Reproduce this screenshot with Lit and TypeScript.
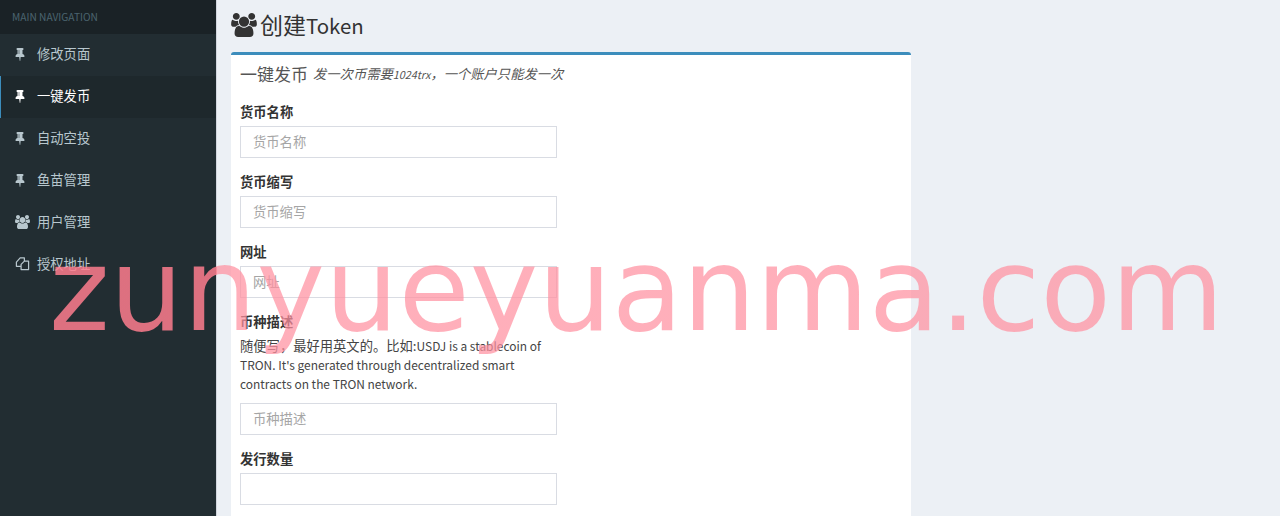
import { LitElement, html, css, svg } from "lit";
import { customElement } from "lit/decorators.js";

const pin = svg`<path d="M800 864v-448q0-14-9-23t-23-9-23 9-9 23v448q0 14 9 23t23 9 23-9 9-23zm672 352q0 26-19 45t-45 19h-429l-51 483q-2 12-10.5 20.5t-20.5 8.5h-1q-27 0-32-27l-76-485h-404q-26 0-45-19t-19-45q0-123 78.5-221.5t177.5-98.5v-512q-52 0-90-38t-38-90 38-90 90-38h640q52 0 90 38t38 90-38 90-90 38v512q99 0 177.5 98.5t78.5 221.5z"/>`;
const usersPath = svg`<path d="M593 896q-162 5-265 128h-134q-82 0-138-40.500t-56-118.500q0-353 124-353 6 0 43.500 21t97.500 42.500 119 21.500q67 0 133-23-5 37-5 66 0 139 81 256zm1071 637q0 120-73 189.500t-194 69.500h-874q-121 0-194-69.500t-73-189.500q0-53 3.500-103.500t14-109 26.500-108.500 43-97.500 62-81 85.500-53.500 111.500-20q10 0 43 21.500t73 48 107 48 135 21.500 135-21.500 107-48 73-48 43-21.500q61 0 111.500 20t85.500 53.500 62 81 43 97.500 26.500 108.500 14 109 3.500 103.500zm-1024-1277q0 106-75 181t-181 75-181-75-75-181 75-181 181-75 181 75 75 181zm704 384q0 159-112.500 271.500t-271.500 112.500-271.500-112.500-112.500-271.500 112.500-271.500 271.500-112.500 271.500 112.500 112.500 271.500zm576 225q0 78-56 118.500t-138 40.500h-134q-103-123-265-128 81-117 81-256 0-29-5-66 66 23 133 23 59 0 119-21.500t97.500-42.500 43.500-21q124 0 124 353zm-128-609q0 106-75 181t-181 75-181-75-75-181 75-181 181-75 181 75 75 181z"/>`;
const objIcon = svg`<path fill="none" stroke="currentColor" stroke-width="1.300" stroke-linejoin="round" d="M6.500 11H1.500V6.500L5.500 2H10V5.500M6.500 9L10 5.500H14.500V14.500H6.500z"/>`;

const icon = (k: string) => {
  if (k === "pin") return html`<svg class="ic pin" viewBox="0 0 1792 1792" fill="currentColor" width="14" height="14">${pin}</svg>`;
  if (k === "users") return html`<svg class="ic" viewBox="0 0 1920 1792" fill="currentColor" width="15" height="14">${usersPath}</svg>`;
  return html`<svg class="ic" viewBox="0 0 16 16" width="15" height="15">${objIcon}</svg>`;
};

const NAV = [
  ["pin", "修改页面"],
  ["pin", "一键发币", true],
  ["pin", "自动空投"],
  ["pin", "鱼苗管理"],
  ["users", "用户管理"],
  ["obj", "授权地址"],
] as const;

@customElement("app-root")
export class AppRoot extends LitElement {
  static styles = css`
    :host {
      display: block;
      width: 1280px;
      height: 516px;
      overflow: hidden;
      position: relative;
      font-family: "Noto Sans CJK SC", sans-serif;
      font-size: 13.3px;
      color: #333;
      background: #ecf0f5;
    }
    .layout { display: flex; height: 516px; }
    .side { width: 216px; flex: none; background: #222d32; border-right: 1px solid #d2d6de; box-sizing: content-box; }
    .nav-h { height: 34px; background: #1a2226; color: #4b646f; font-size: 10.2px; line-height: 33px; padding-left: 12px; }
    .nav-i { height: 42px; display: flex; align-items: center; color: #b8c7ce; border-left: 1px solid transparent; box-sizing: border-box; padding: 0 0 3px 14px; }
    .nav-i.active { background: #1e282c; color: #fff; border-left-color: #3c8dbc; }
    .ic-wrap { width: 22px; display: flex; flex: none; }
    .pin { margin-left: -2px; }
    .main { flex: 1; padding: 0 14px; min-width: 0; }
    h1 { margin: 0; height: 52px; padding-bottom: 3px; box-sizing: border-box; display: flex; align-items: center; gap: 3px; font-size: 23px; font-weight: 400; line-height: 1; }
    h1 svg { display: block; }
    h1 .lat { font-size: 20.4px; }
    .box { width: 680px; background: #fff; border-top: 3px solid #3c8dbc; border-radius: 3px 3px 0 0; box-sizing: border-box; height: 470px; padding: 0 9px; }
    .box-h { height: 36px; display: flex; align-items: center; gap: 5px; }
    .box-h span.t { font-size: 17px; color: #555; }
    .box-h em { font-size: 13.3px; color: #555; }
    .box-h em .lat { font-size: 10.8px; }
    .field { width: 317px; margin-bottom: 14px; }
    label { display: block; font-weight: 700; line-height: 20px; margin-bottom: 4px; }
    .help { line-height: 19px; margin: 0 0 10px; color: #444; }
    .help .lat { font-size: 11.95px; line-height: 1; }
    input { display: block; width: 100%; height: 32px; box-sizing: border-box; border: 1px solid #d9dce3; padding: 0 12px 2px; font: inherit; background: #fff; }
    input::placeholder { color: #a5a5a5; opacity: 1; }
    .first { padding-top: 11px; }
    .wm {
      position: absolute;
      left: 49px;
      top: 215px;
      font-family: "DejaVu Sans", sans-serif;
      font-size: 115.8px;
      line-height: 150px;
      color: transparent;
      background: linear-gradient(to right, rgba(254, 125, 142, 0.85) 168px, rgba(255, 144, 160, 0.72) 168px);
      -webkit-background-clip: text;
      background-clip: text;
      white-space: nowrap;
      pointer-events: none;
    }
  `;

  render() {
    return html`
      <div class="layout">
        <aside class="side">
          <div class="nav-h">MAIN NAVIGATION</div>
          ${NAV.map(
            (n) => html`<div class="nav-i ${n[2] ? "active" : ""}">
              <span class="ic-wrap">${icon(n[0])}</span><span>${n[1]}</span>
            </div>`
          )}
        </aside>
        <main class="main">
          <h1>
            <svg viewBox="0 0 1920 1792" fill="currentColor" width="26" height="24">${usersPath}</svg>
            <span>创建<span class="lat">Token</span></span>
          </h1>
          <section class="box">
            <div class="box-h"><span class="t">一键发币</span><em>发一次币需要<span class="lat">1024trx</span>，一个账户只能发一次</em></div>
            <div class="first"></div>
            <div class="field"><label>货币名称</label><input placeholder="货币名称" /></div>
            <div class="field"><label>货币缩写</label><input placeholder="货币缩写" /></div>
            <div class="field"><label>网址</label><input placeholder="网址" /></div>
            <div class="field">
              <label>币种描述</label>
              <div class="help">随便写，最好用英文的。比如:<span class="lat">USDJ is a stablecoin of TRON. It's generated through decentralized smart contracts on the TRON network.</span></div>
              <input placeholder="币种描述" />
            </div>
            <div class="field"><label>发行数量</label><input /></div>
          </section>
        </main>
      </div>
      <div class="wm">zunyueyuanma.com</div>
    `;
  }
}
